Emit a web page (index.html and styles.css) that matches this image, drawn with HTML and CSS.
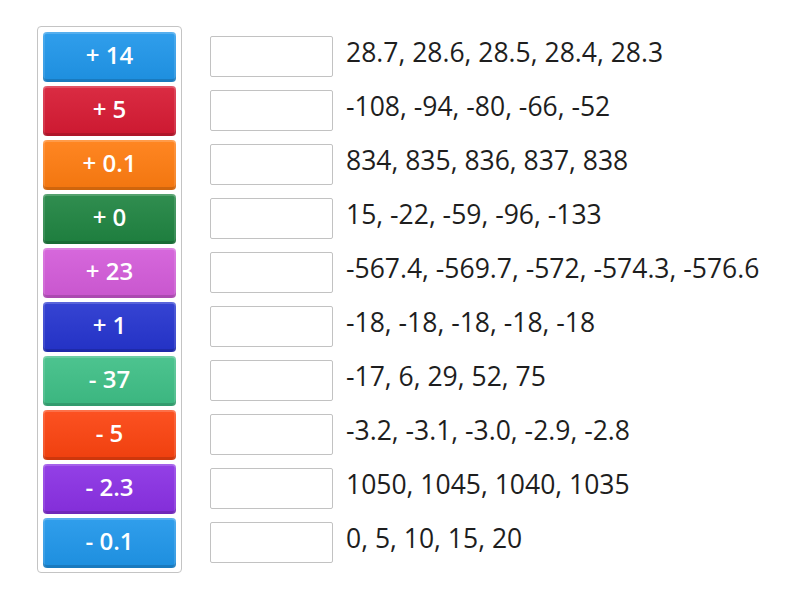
FILE: index.html
```html
<!DOCTYPE html>
<html>
<head>
<meta charset="utf-8">
<link rel="stylesheet" href="styles.css">
</head>
<body>
<div class="page">
  <div class="tiles">
    <div class="tile c-blue">+ 14</div>
    <div class="tile c-red">+ 5</div>
    <div class="tile c-orange">+ 0.1</div>
    <div class="tile c-dgreen">+ 0</div>
    <div class="tile c-pink">+ 23</div>
    <div class="tile c-navy">+ 1</div>
    <div class="tile c-green">- 37</div>
    <div class="tile c-redorange">- 5</div>
    <div class="tile c-purple">- 2.3</div>
    <div class="tile c-blue">- 0.1</div>
  </div>
  <div class="rows">
    <div class="row"><div class="slot"></div><div class="seq">28.7, 28.6, 28.5, 28.4, 28.3</div></div>
    <div class="row"><div class="slot"></div><div class="seq">-108, -94, -80, -66, -52</div></div>
    <div class="row"><div class="slot"></div><div class="seq">834, 835, 836, 837, 838</div></div>
    <div class="row"><div class="slot"></div><div class="seq">15, -22, -59, -96, -133</div></div>
    <div class="row"><div class="slot"></div><div class="seq">-567.4, -569.7, -572, -574.3, -576.6</div></div>
    <div class="row"><div class="slot"></div><div class="seq">-18, -18, -18, -18, -18</div></div>
    <div class="row"><div class="slot"></div><div class="seq">-17, 6, 29, 52, 75</div></div>
    <div class="row"><div class="slot"></div><div class="seq">-3.2, -3.1, -3.0, -2.9, -2.8</div></div>
    <div class="row"><div class="slot"></div><div class="seq">1050, 1045, 1040, 1035</div></div>
    <div class="row"><div class="slot"></div><div class="seq">0, 5, 10, 15, 20</div></div>
  </div>
</div>
</body>
</html>
```
FILE: styles.css
```css
html, body {
  margin: 0;
  padding: 0;
  background: #fff;
}
body {
  font-family: "Open Sans", "Noto Sans", sans-serif;
}
.page {
  display: flex;
  align-items: flex-start;
  padding: 26px 0 0 37px;
  gap: 28px;
}
.tiles {
  display: flex;
  flex-direction: column;
  gap: 4px;
  padding: 5px 5px 4px 5px;
  border: 1px solid #c4c4c4;
  border-radius: 4px;
}
.tile {
  width: 133px;
  height: 50px;
  box-sizing: border-box;
  border-radius: 4px;
  color: #fff;
  font-weight: 600;
  font-size: 24px;
  display: flex;
  align-items: center;
  justify-content: center;
  padding-bottom: 6px;
  box-shadow: inset 0 -3px 0 rgba(0,0,0,0.14), inset 0 2px 0 rgba(255,255,255,0.18), inset 2px 0 0 rgba(255,255,255,0.12), inset -2px 0 0 rgba(255,255,255,0.12);
  background-image: linear-gradient(rgba(255,255,255,0.08), rgba(0,0,0,0.05));
}
.c-blue { background-color: #1f96ea; }
.c-red { background-color: #d71a33; }
.c-orange { background-color: #ff7c10; }
.c-dgreen { background-color: #1f8441; }
.c-pink { background-color: #d35bd9; }
.c-navy { background-color: #2534cf; }
.c-green { background-color: #3ebf86; }
.c-redorange { background-color: #fc430f; }
.c-purple { background-color: #8a30e4; }
.rows {
  display: flex;
  flex-direction: column;
  gap: 4px;
  padding-top: 6px;
}
.row {
  height: 50px;
  display: flex;
  align-items: flex-start;
  gap: 13px;
}
.slot {
  width: 123px;
  height: 41px;
  box-sizing: border-box;
  margin-top: 4px;
  border: 1px solid #c2c2c2;
  border-radius: 2px;
  background: #fff;
}
.seq {
  font-size: 26.5px;
  line-height: 36px;
  margin-top: 2px;
  color: #1e1e1e;
  white-space: nowrap;
}
```
